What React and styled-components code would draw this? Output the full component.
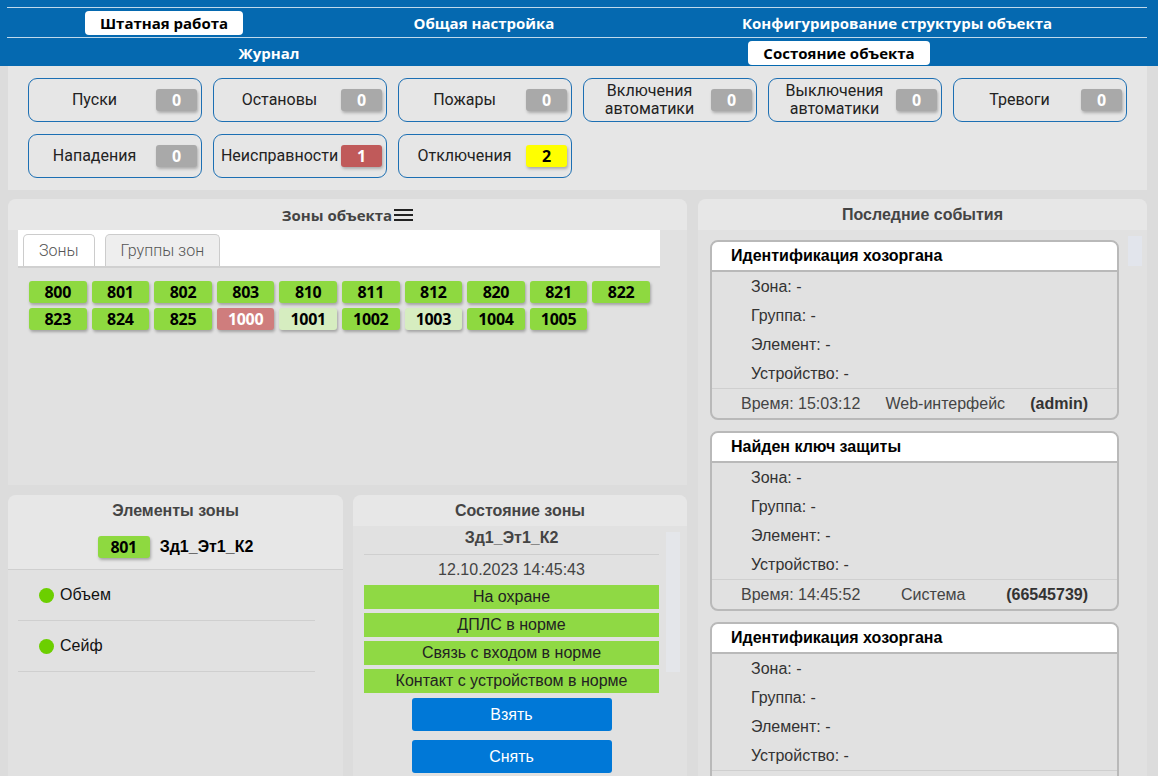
import React from 'react';
import styled, { createGlobalStyle } from 'styled-components';

const GlobalStyle = createGlobalStyle`
  html, body {
    margin: 0;
    padding: 0;
    overflow: hidden;
    background: #dcdcdc;
    font-family: 'Liberation Sans', Arial, sans-serif;
  }
`;

const Nav = styled.nav`
  background: #0569b0;
  height: 66px;
  box-sizing: border-box;
  padding: 7px 11px 0 7px;
`;

const NavRow = styled.div`
  display: grid;
  grid-template-columns: ${({ $cols }) => $cols};
  border-top: 1px solid rgba(255, 255, 255, 0.75);
  height: ${({ $h }) => $h}px;
  align-items: center;
`;

const NavItem = styled.div`
  justify-self: center;
  font-family: 'Open Sans', sans-serif;
  font-weight: 700;
  font-size: 15px;
  line-height: 24px;
  padding: 0 15px;
  border-radius: 4px;
  color: ${({ $active }) => ($active ? '#000' : '#fff')};
  background: ${({ $active }) => ($active ? '#fff' : 'transparent')};
`;

const Main = styled.div`
  padding: 0 11px 0 8px;
`;

const Counters = styled.div`
  background: #e6e6e6;
  padding: 12px 20px 12px;
  display: grid;
  grid-template-columns: repeat(6, 174px);
  column-gap: 11px;
  row-gap: 12px;
`;

const CounterBox = styled.div`
  box-sizing: border-box;
  height: 44px;
  border: 1px solid #1c6fb3;
  border-radius: 9px;
  display: flex;
  align-items: center;
  padding-right: 4px;
`;

const CounterLabel = styled.div`
  flex: 1;
  text-align: center;
  font-family: Roboto, sans-serif;
  font-size: 16px;
  line-height: 18px;
  color: #222;
  padding-left: 4px;
`;

const Badge = styled.div`
  width: 41px;
  height: 22px;
  border-radius: 3px;
  display: flex;
  align-items: center;
  justify-content: center;
  font-family: 'Open Sans', sans-serif;
  font-weight: 700;
  font-size: 16px;
  background: ${({ $bg }) => $bg};
  color: ${({ $fg }) => $fg};
  box-shadow: 1px 2px 3px rgba(0, 0, 0, 0.25);
`;

const Grid = styled.div`
  display: grid;
  grid-template-columns: 679px 449px;
  column-gap: 11px;
  margin-top: 9px;
`;

const LeftCol = styled.div`
  display: flex;
  flex-direction: column;
  gap: 10px;
`;

const BottomRow = styled.div`
  display: grid;
  grid-template-columns: 335px 334px;
  column-gap: 10px;
`;

const Panel = styled.div`
  background: #e1e1e1;
  border-radius: 8px 8px 0 0;
  height: ${({ $h }) => $h}px;
  display: flex;
  flex-direction: column;
  overflow: hidden;
`;

const PanelHead = styled.div`
  background: #e7e7e7;
  height: ${({ $h }) => $h || 31}px;
  display: flex;
  align-items: center;
  justify-content: center;
  gap: 2px;
  font-family: ${({ $open }) => ($open ? "'Open Sans', sans-serif" : "'Liberation Sans', Arial, sans-serif")};
  font-weight: 700;
  font-size: ${({ $open }) => ($open ? 15 : 16)}px;
  color: #444;
  flex-shrink: 0;
`;

const TabStrip = styled.div`
  background: #fff;
  margin: 0 27px 0 10px;
  height: 38px;
  display: flex;
  align-items: flex-end;
  gap: 10px;
  padding-left: 5px;
  border-bottom: 2px solid #d0d0d0;
  box-sizing: border-box;
`;

const Tab = styled.div`
  box-sizing: border-box;
  height: 32px;
  padding: 0 15px;
  display: flex;
  align-items: center;
  font-family: Roboto, sans-serif;
  font-weight: 300;
  font-size: 16px;
  color: #555;
  border: 1px solid #ccc;
  border-bottom: none;
  border-radius: 5px 5px 0 0;
  background: ${({ $active }) => ($active ? '#fff' : '#eeeeee')};
`;

const Chips = styled.div`
  display: flex;
  flex-wrap: wrap;
  gap: 5px;
  padding: 13px 30px 0 21px;
`;

const Chip = styled.div`
  width: ${({ $w }) => $w || 57.6}px;
  height: 22px;
  border-radius: 3px;
  display: flex;
  align-items: center;
  justify-content: center;
  font-family: 'Open Sans', sans-serif;
  font-weight: 700;
  font-size: 16px;
  letter-spacing: -0.3px;
  background: ${({ $bg }) => $bg};
  color: ${({ $fg }) => $fg};
  box-shadow: 1px 2px 3px rgba(0, 0, 0, 0.28);
`;

const ZoneHead = styled.div`
  background: #e7e7e7;
  border-bottom: 1px solid #cfcfcf;
  height: 75px;
  box-sizing: border-box;
  display: flex;
  flex-direction: column;
  align-items: center;
`;

const ZoneTitle = styled.div`
  font-weight: 700;
  font-size: 16px;
  color: #444;
  margin-top: 7px;
`;

const ZoneId = styled.div`
  display: flex;
  align-items: center;
  gap: 10px;
  margin-top: 16px;
`;

const ZoneName = styled.div`
  font-weight: 700;
  font-size: 16px;
  color: #000;
`;

const ElementList = styled.div`
  margin: 0 28px 0 10px;
`;

const ElementRow = styled.div`
  height: 50px;
  border-bottom: 1px solid #cfcfcf;
  display: flex;
  align-items: center;
  gap: 6px;
  padding-left: 21px;
  font-size: 16px;
  color: #111;
`;

const Dot = styled.span`
  width: 15px;
  height: 15px;
  border-radius: 50%;
  background: #6ccf00;
`;

const StateBody = styled.div`
  display: flex;
  padding: 0 7px 0 11px;
`;

const StateContent = styled.div`
  width: 296px;
  display: flex;
  flex-direction: column;
`;

const StateName = styled.div`
  text-align: center;
  font-weight: 700;
  font-size: 16px;
  color: #444;
  height: 29px;
  line-height: 24px;
  border-bottom: 1px solid #cfcfcf;
  box-sizing: border-box;
`;

const StateDate = styled.div`
  text-align: center;
  font-size: 16px;
  color: #444;
  height: 30px;
  line-height: 30px;
`;

const StatusRow = styled.div`
  background: #8fd944;
  height: 24px;
  margin-bottom: 4px;
  text-align: center;
  font-size: 16px;
  line-height: 24px;
  color: #222;
`;

const ActionButton = styled.div`
  width: 200px;
  height: 33px;
  margin: ${({ $first }) => ($first ? '1px' : '9px')} auto 0;
  background: #0078d7;
  border-radius: 3px;
  color: #fff;
  font-size: 16px;
  display: flex;
  align-items: center;
  justify-content: center;
`;

const Track = styled.div`
  width: 14px;
  margin: 6px 0 0 7px;
  height: 140px;
  background: #e4e6ea;
`;

const EventsBody = styled.div`
  display: flex;
  padding: 10px 5px 0 12px;
  gap: 9px;
`;

const EventsList = styled.div`
  width: 409px;
  display: flex;
  flex-direction: column;
  gap: 11px;
`;

const Thumb = styled.div`
  width: 14px;
  height: 30px;
  margin-top: -4px;
  background: #e2e5ec;
`;

const Card = styled.div`
  border: 2px solid #b9b9b9;
  border-radius: 8px;
  overflow: hidden;
`;

const CardHead = styled.div`
  background: #fff;
  height: 28px;
  border-bottom: 2px solid #b9b9b9;
  padding-left: 19px;
  display: flex;
  align-items: center;
  font-weight: 700;
  font-size: 16px;
  color: #000;
`;

const CardRow = styled.div`
  height: 29px;
  line-height: 29px;
  padding-left: 39px;
  font-size: 16px;
  color: #333;
`;

const CardFoot = styled.div`
  border-top: 1px solid #cfcfcf;
  height: 29px;
  display: flex;
  align-items: center;
  padding: 0 29px;
  font-size: 16px;
  color: #444;
`;

const FootMid = styled.div`
  flex: 1;
  text-align: center;
`;

const FootRight = styled.div`
  font-weight: 700;
  color: #333;
`;

const Burger = () => (
  <svg width="19" height="14" viewBox="0 0 19 14">
    <rect x="0" y="1" width="19" height="2" fill="#222" />
    <rect x="0" y="6" width="19" height="2" fill="#222" />
    <rect x="0" y="11" width="19" height="2" fill="#222" />
  </svg>
);

const counters = [
  ['Пуски', '0'],
  ['Остановы', '0'],
  ['Пожары', '0'],
  ['Включения автоматики', '0'],
  ['Выключения автоматики', '0'],
  ['Тревоги', '0'],
  ['Нападения', '0'],
  ['Неисправности', '1', 'red'],
  ['Отключения', '2', 'yellow'],
];

const badgeColors = {
  gray: ['#a9a9a9', '#fff'],
  red: ['#c05a5a', '#fff'],
  yellow: ['#ffff00', '#000'],
};

const zones = [
  '800', '801', '802', '803', '810', '811', '812', '820', '821', '822',
  '823', '824', '825', '1000', '1001', '1002', '1003', '1004', '1005',
];

const zoneColor = (z) => {
  if (z === '1000') return ['#cf7d7d', '#fff'];
  if (z === '1001' || z === '1003') return ['#d6edc0', '#000'];
  return ['#8ed940', '#000'];
};

const events = [
  { title: 'Идентификация хозоргана', time: '15:03:12', src: 'Web-интерфейс', who: '(admin)' },
  { title: 'Найден ключ защиты', time: '14:45:52', src: 'Система', who: '(66545739)' },
  { title: 'Идентификация хозоргана', time: '15:03:12', src: 'Web-интерфейс', who: '(admin)' },
];

const EventCard = ({ e }) => (
  <Card>
    <CardHead>{e.title}</CardHead>
    <CardRow>Зона: -</CardRow>
    <CardRow>Группа: -</CardRow>
    <CardRow>Элемент: -</CardRow>
    <CardRow>Устройство: -</CardRow>
    <CardFoot>
      <div>Время: {e.time}</div>
      <FootMid>{e.src}</FootMid>
      <FootRight>{e.who}</FootRight>
    </CardFoot>
  </Card>
);

const App = () => (
  <>
    <GlobalStyle />
    <Nav>
      <NavRow $cols="314px 326px 1fr" $h={29}>
        <NavItem $active>Штатная работа</NavItem>
        <NavItem>Общая настройка</NavItem>
        <NavItem>Конфигурирование структуры объекта</NavItem>
      </NavRow>
      <NavRow $cols="524px 1fr" $h={29}>
        <NavItem>Журнал</NavItem>
        <NavItem $active>Состояние объекта</NavItem>
      </NavRow>
    </Nav>
    <Main>
      <Counters>
        {counters.map(([label, value, kind]) => {
          const [bg, fg] = badgeColors[kind || 'gray'];
          return (
            <CounterBox key={label}>
              <CounterLabel>{label}</CounterLabel>
              <Badge $bg={bg} $fg={fg}>{value}</Badge>
            </CounterBox>
          );
        })}
      </Counters>
      <Grid>
        <LeftCol>
          <Panel $h={286}>
            <PanelHead $open>
              Зоны объекта
              <Burger />
            </PanelHead>
            <TabStrip>
              <Tab $active>Зоны</Tab>
              <Tab>Группы зон</Tab>
            </TabStrip>
            <Chips>
              {zones.map((z) => {
                const [bg, fg] = zoneColor(z);
                return (
                  <Chip key={z} $bg={bg} $fg={fg}>{z}</Chip>
                );
              })}
            </Chips>
          </Panel>
          <BottomRow>
            <Panel $h={290}>
              <ZoneHead>
                <ZoneTitle>Элементы зоны</ZoneTitle>
                <ZoneId>
                  <Chip $w={52} $bg="#8ed940" $fg="#000">801</Chip>
                  <ZoneName>Зд1_Эт1_К2</ZoneName>
                </ZoneId>
              </ZoneHead>
              <ElementList>
                <ElementRow><Dot />Объем</ElementRow>
                <ElementRow><Dot />Сейф</ElementRow>
              </ElementList>
            </Panel>
            <Panel $h={290}>
              <PanelHead>Состояние зоны</PanelHead>
              <StateBody>
                <StateContent>
                  <StateName>Зд1_Эт1_К2</StateName>
                  <StateDate>12.10.2023 14:45:43</StateDate>
                  <StatusRow>На охране</StatusRow>
                  <StatusRow>ДПЛС в норме</StatusRow>
                  <StatusRow>Связь с входом в норме</StatusRow>
                  <StatusRow>Контакт с устройством в норме</StatusRow>
                  <ActionButton $first>Взять</ActionButton>
                  <ActionButton>Снять</ActionButton>
                </StateContent>
                <Track />
              </StateBody>
            </Panel>
          </BottomRow>
        </LeftCol>
        <Panel $h={586}>
          <PanelHead>Последние события</PanelHead>
          <EventsBody>
            <EventsList>
              {events.map((e, i) => (
                <EventCard key={i} e={e} />
              ))}
            </EventsList>
            <Thumb />
          </EventsBody>
        </Panel>
      </Grid>
    </Main>
  </>
);

export default App;
